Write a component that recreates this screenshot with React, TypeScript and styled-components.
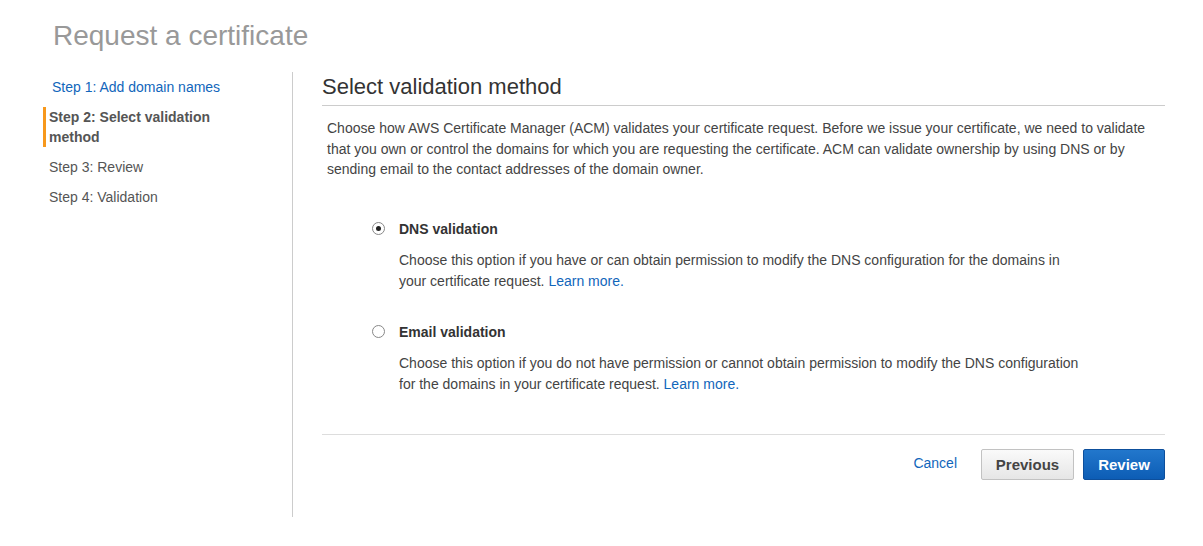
import styled, { createGlobalStyle } from 'styled-components';

const steps = [
    { label: 'Step 1: Add domain names', state: 'link' },
    { label: 'Step 2: Select validation method', state: 'active' },
    { label: 'Step 3: Review', state: 'idle' },
    { label: 'Step 4: Validation', state: 'idle' },
] as const;

const options = [
    {
        title: 'DNS validation',
        checked: true,
        text: 'Choose this option if you have or can obtain permission to modify the DNS configuration for the domains in your certificate request.',
    },
    {
        title: 'Email validation',
        checked: false,
        text: 'Choose this option if you do not have permission or cannot obtain permission to modify the DNS configuration for the domains in your certificate request.',
    },
];

const App = (): JSX.Element => {
    return (
        <>
            <GlobalStyle />
            <Page>
                <Title>Request a certificate</Title>
                <Body>
                    <Sidebar>
                        {steps.map(step =>
                            <StepItem key={step.label} $state={step.state}>
                                {step.label}
                            </StepItem>
                        )}
                    </Sidebar>
                    <Main>
                        <SectionHeading>Select validation method</SectionHeading>
                        <Intro>
                            Choose how AWS Certificate Manager (ACM) validates your certificate request. Before we issue your certificate, we need to validate that you own or control the domains for which you are requesting the certificate. ACM can validate ownership by using DNS or by sending email to the contact addresses of the domain owner.
                        </Intro>
                        <OptionList>
                            {options.map(opt =>
                                <Option key={opt.title}>
                                    <OptionLabel>
                                        <Radio $checked={opt.checked} />
                                        <OptionTitle>{opt.title}</OptionTitle>
                                    </OptionLabel>
                                    <OptionText>
                                        {opt.text} <TextLink href="#">Learn more.</TextLink>
                                    </OptionText>
                                </Option>
                            )}
                        </OptionList>
                        <Footer>
                            <CancelLink href="#">Cancel</CancelLink>
                            <SecondaryButton>Previous</SecondaryButton>
                            <PrimaryButton>Review</PrimaryButton>
                        </Footer>
                    </Main>
                </Body>
            </Page>
        </>
    )
};

const GlobalStyle = createGlobalStyle`
    body {
        margin: 0;
        background: #fff;
        font-family: "Liberation Sans", Arial, sans-serif;
        font-size: 14px;
        color: #444;
    }
`;

const Page = styled.div`
    padding: 19px 38px 0 43px;
`;

const Title = styled.h1`
    margin: 0 0 0 10px;
    font-size: 28px;
    line-height: 34px;
    font-weight: normal;
    color: #999;
`;

const Body = styled.div`
    display: flex;
    margin-top: 19px;
`;

const Sidebar = styled.nav`
    width: 250px;
    flex: none;
    height: 445px;
    box-sizing: border-box;
    padding-top: 5px;
    border-right: 1px solid #ccc;
    display: flex;
    flex-direction: column;
    gap: 10px;
`;

const StepItem = styled.div<{ $state: 'link' | 'active' | 'idle' }>`
    line-height: 20px;
    width: 190px;
    padding-left: ${p => p.$state === 'link' ? '6px' : '3px'};
    border-left: 3px solid ${p => p.$state === 'active' ? '#f7981c' : 'transparent'};
    color: ${p => p.$state === 'link' ? '#1166bb' : '#555'};
    font-weight: ${p => p.$state === 'active' ? 'bold' : 'normal'};
`;

const Main = styled.main`
    flex: 1;
    margin-left: 29px;
`;

const SectionHeading = styled.h2`
    margin: 0;
    padding: 2px 0 5px;
    font-size: 22px;
    line-height: 26px;
    font-weight: normal;
    color: #333;
    border-bottom: 1px solid #ccc;
`;

const Intro = styled.p`
    margin: 12px 0 0;
    padding: 0 5px;
    line-height: 20.5px;
`;

const OptionList = styled.div`
    margin-top: 39px;
    padding-left: 50px;
    display: flex;
    flex-direction: column;
    gap: 30px;
`;

const Option = styled.div`
    display: flex;
    flex-direction: column;
    gap: 11px;
`;

const OptionLabel = styled.label`
    display: flex;
    align-items: center;
    line-height: 20px;
`;

const Radio = styled.span<{ $checked: boolean }>`
    width: 11px;
    height: 11px;
    border: 1px solid #888;
    border-radius: 50%;
    background: #fff;
    position: relative;
    margin-right: 14px;
    &::after {
        content: '';
        display: ${p => p.$checked ? 'block' : 'none'};
        position: absolute;
        left: 3px;
        top: 3px;
        width: 5px;
        height: 5px;
        border-radius: 50%;
        background: #222;
    }
`;

const OptionTitle = styled.span`
    font-weight: bold;
    color: #333;
`;

const OptionText = styled.p`
    margin: 0;
    padding-left: 27px;
    max-width: 690px;
    line-height: 21px;
`;

const TextLink = styled.a`
    color: #1166bb;
    text-decoration: none;
`;

const Footer = styled.div`
    margin-top: 39px;
    border-top: 1px solid #ddd;
    padding-top: 14px;
    display: flex;
    justify-content: flex-end;
    align-items: center;
    gap: 9px;
`;

const CancelLink = styled(TextLink)`
    margin-right: 15px;
    margin-top: -3px;
`;

const ButtonBase = styled.button`
    height: 31px;
    padding: 0 10px;
    border-radius: 2px;
    font-family: "Liberation Sans", Arial, sans-serif;
    font-size: 15px;
    font-weight: bold;
    cursor: pointer;
`;

const SecondaryButton = styled(ButtonBase)`
    width: 93px;
    color: #444;
    border: 1px solid #c2c2c2;
    background: linear-gradient(#fafafa, #e6e6e6);
`;

const PrimaryButton = styled(ButtonBase)`
    width: 82px;
    color: #fff;
    border: 1px solid #0d4f9c;
    background: linear-gradient(#2277cc, #0d5db5);
`;

export default App;
